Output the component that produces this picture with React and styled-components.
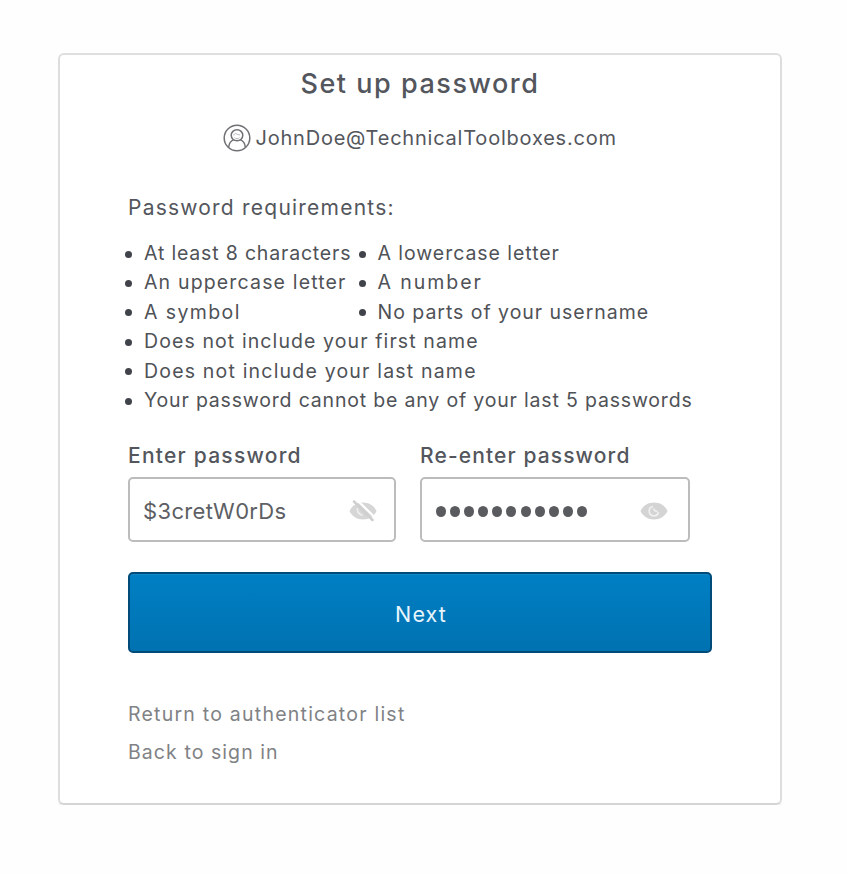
import React from "react";
import styled, { createGlobalStyle } from "styled-components";

const GlobalStyle = createGlobalStyle`
  *, *::before, *::after { box-sizing: border-box; }
  body {
    margin: 0;
    background: #fefefe;
    font-family: Inter, "Open Sans", sans-serif;
    color: #53565c;
  }
`;

const Page = styled.main`
  padding: 53px 0 0 58px;
`;

const Card = styled.section`
  width: 724px;
  height: 752px;
  padding: 11px 68px 0;
  border: 2px solid #dedede;
  border-bottom-color: #d4d4d4;
  border-radius: 6px;
  background: #fff;
  box-shadow: 0 3px 1px #f4f4f4;
`;

const Text = styled.span`
  display: block;
  white-space: nowrap;
  letter-spacing: ${(p) => p.$spacing}px;
`;

const Title = styled.h1`
  display: flex;
  justify-content: center;
  margin: 0;
  font-size: 27px;
  font-weight: 500;
  line-height: 36px;
`;

const User = styled.div`
  display: flex;
  align-items: center;
  gap: 5px;
  height: 30px;
  margin: 21px 0 0 94.5px;
  font-size: 20px;
  line-height: 30px;
`;

const Heading = styled.h2`
  margin: 40px 0 0;
  font-size: 21px;
  font-weight: 400;
  line-height: 30px;
`;

const Requirements = styled.ul`
  display: grid;
  grid-template-columns: 233.5px 1fr;
  grid-auto-rows: 29.4px;
  margin: 16px 0 0;
  padding: 0;
  list-style: none;
  font-size: 19.5px;
  line-height: 29.4px;
  color: #4f5257;
`;

const Requirement = styled.li`
  display: flex;
  align-items: center;
  gap: 12px;
  grid-column: ${(p) => (p.$wide ? "1 / -1" : "auto")};
  margin-left: -3px;

  &::before {
    content: "";
    width: 7px;
    height: 7px;
    margin-top: 1px;
    border-radius: 50%;
    background: #40434a;
  }
`;

const Fields = styled.div`
  display: flex;
  gap: 24px;
  margin-top: 26px;
`;

const Field = styled.div`
  width: ${(p) => p.$width}px;
`;

const Label = styled.div`
  font-size: 21px;
  font-weight: 500;
  line-height: 30px;
`;

const InputBox = styled.div`
  display: flex;
  align-items: center;
  justify-content: space-between;
  height: 65px;
  margin-top: 6px;
  padding: 2px ${(p) => p.$inset}px 0 13px;
  border: 2px solid #bcbcbc;
  border-radius: 5px;
  font-size: 22px;
  color: #5d5f64;

  svg { flex: none; }
`;

const Dots = styled.div`
  display: flex;
  gap: 4.1px;
  padding-left: 1px;
`;

const Dot = styled.i`
  width: 10px;
  height: 11px;
  margin-top: 2px;
  border-radius: 50%;
  background: #5a5b5f;
`;

const NextButton = styled.button`
  display: flex;
  align-items: center;
  justify-content: center;
  width: 584px;
  height: 81px;
  margin: 30px 0 0;
  padding: 3px 0 0 2px;
  border: 2px solid #004b7a;
  border-radius: 5px;
  background: linear-gradient(#007fc4, #0072b1);
  box-shadow: inset 0 1px 0 #1689c7;
  color: #e9f5fc;
  font: 400 21.5px/30px Inter, sans-serif;
`;

const Links = styled.nav`
  display: flex;
  flex-direction: column;
  align-items: flex-start;
  gap: 8px;
  margin-top: 46px;
`;

const Link = styled.a`
  color: #808285;
  font-size: 19.5px;
  line-height: 30px;
`;

const UserIcon = () => (
  <svg width="28" height="28" viewBox="0 0 28 28" fill="none" stroke="#707174" strokeWidth="1.5">
    <circle cx="14" cy="14" r="12.8" />
    <ellipse cx="14" cy="11.3" rx="5.8" ry="5.5" />
    <path d="M5.700 23.200c.3-4.200 2.300-6.600 5.300-7.600M22.300 23.200c-.3-4.200-2.300-6.600-5.300-7.600" />
    <path d="M10.800 11.500c.2-1.300 1-2 2-2.100 1.200 1 2.700 1.400 4.300 1.500M11.500 13.500c1.300 1.700 3.700 1.700 5 0" stroke="#b5b6b8" strokeWidth="1" />
  </svg>
);

const EyeIcon = () => (
  <svg width="28" height="20" viewBox="0 0 28 20">
    <path d="M.5 10C3 4.600 8 1.500 14 1.500S25 4.600 27.500 10C25 15.400 20 18.500 14 18.500S3 15.400.5 10Z" fill="#d4d4d4" />
    <path d="M13 5.500A4.700 4.700 0 1 0 18.500 11" fill="none" stroke="#efefef" strokeWidth="1.700" />
    <path d="M13.500 7.500q1 3 4 3" fill="none" stroke="#efefef" strokeWidth="1.500" />
  </svg>
);

const HiddenEyeIcon = () => (
  <svg width="28" height="22" viewBox="0 0 28 22">
    <path d="M.5 11C3 5.600 8 2.500 14 2.500S25 5.600 27.500 11C25 16.400 20 19.500 14 19.500S3 16.400.5 11Z" fill="#d6d6d6" />
    <path d="M7.500-.5 26.500 18" stroke="#fff" strokeWidth="2.200" />
    <path d="M5 1.500 23.500 20" stroke="#cfcfcf" strokeWidth="2.500" strokeLinecap="round" />
    <path d="M8.500 8q-1 5 5 7.500" fill="none" stroke="#eeeeee" strokeWidth="1.600" />
  </svg>
);

const requirements = [
  { text: "At least 8 characters", spacing: 0.82 },
  { text: "A lowercase letter", spacing: 0.95 },
  { text: "An uppercase letter", spacing: 1.16 },
  { text: "A number", spacing: 1.95 },
  { text: "A symbol", spacing: 1.4 },
  { text: "No parts of your username", spacing: 0.97 },
  { text: "Does not include your first name", spacing: 1.1, wide: true },
  { text: "Does not include your last name", spacing: 1.19, wide: true },
  { text: "Your password cannot be any of your last 5 passwords", spacing: 0.82, wide: true },
];

export default function App() {
  return (
    <Page>
      <GlobalStyle />
      <Card>
        <Title><Text $spacing={1.53}>Set up password</Text></Title>
        <User>
          <UserIcon />
          <Text $spacing={0.78}>JohnDoe@TechnicalToolboxes.com</Text>
        </User>
        <Heading><Text $spacing={1.22}>Password requirements:</Text></Heading>
        <Requirements>
          {requirements.map((r) => (
            <Requirement key={r.text} $wide={r.wide}>
              <Text $spacing={r.spacing}>{r.text}</Text>
            </Requirement>
          ))}
        </Requirements>
        <Fields>
          <Field $width={268}>
            <Label><Text $spacing={1.24}>Enter password</Text></Label>
            <InputBox $inset={17}>
              <Text $spacing={0.35}>$3cretW0rDs</Text>
              <HiddenEyeIcon />
            </InputBox>
          </Field>
          <Field $width={270}>
            <Label><Text $spacing={1.12}>Re-enter password</Text></Label>
            <InputBox $inset={20}>
              <Dots>{Array.from({ length: 11 }, (_, i) => <Dot key={i} />)}</Dots>
              <EyeIcon />
            </InputBox>
          </Field>
        </Fields>
        <NextButton type="button"><Text $spacing={1.1}>Next</Text></NextButton>
        <Links>
          <Link><Text $spacing={1.23}>Return to authenticator list</Text></Link>
          <Link><Text $spacing={1.07}>Back to sign in</Text></Link>
        </Links>
      </Card>
    </Page>
  );
}
